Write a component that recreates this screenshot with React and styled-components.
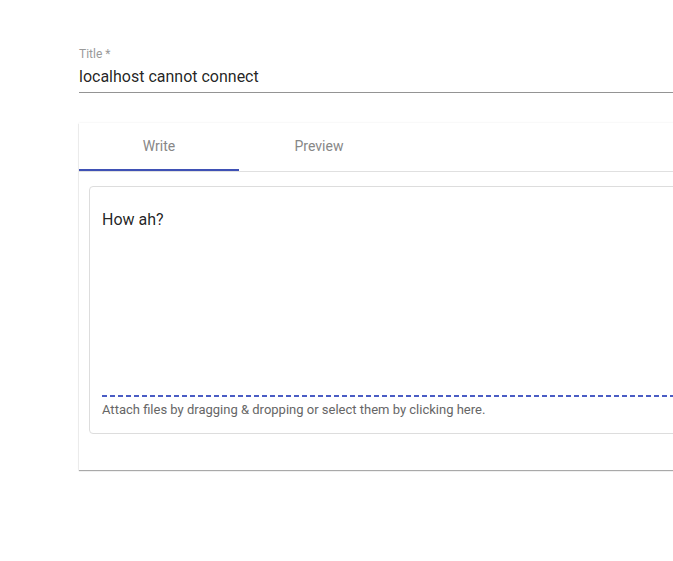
import React from 'react';
import styled, { createGlobalStyle } from 'styled-components';

const GlobalStyle = createGlobalStyle`
  html {
    overflow: hidden;
  }
  body {
    margin: 0;
    min-height: 100vh;
    background: #ffffff;
    font-family: Roboto, "Helvetica Neue", Arial, sans-serif;
    color: rgba(0, 0, 0, 0.87);
  }
`;

const Page = styled.div`
  width: 720px;
  padding: 47px 0 0 79px;
`;

const Field = styled.div`
  display: flex;
  flex-direction: column;
`;

const FieldLabel = styled.label`
  font-size: 12px;
  line-height: 14px;
  color: #9a9a9a;
`;

const FieldInput = styled.div`
  font-size: 16px;
  line-height: 19px;
  padding: 6px 0;
  color: rgba(0, 0, 0, 0.87);
  border-bottom: 1px solid #949494;
`;

const Card = styled.div`
  margin-top: 30px;
  background: #fff;
  box-shadow: 0 1px 1px rgba(0, 0, 0, 0.32), 0 0 2px rgba(0, 0, 0, 0.08);
  padding-bottom: 36px;
`;

const TabBar = styled.div`
  display: flex;
  height: 48px;
  border-bottom: 1px solid #e0e0e0;
`;

const Tab = styled.div`
  position: relative;
  width: 160px;
  display: flex;
  align-items: center;
  justify-content: center;
  padding-bottom: 2px;
  box-sizing: border-box;
  font-size: 14px;
  color: #878787;

  &::after {
    content: '';
    position: absolute;
    left: 0;
    right: 0;
    bottom: 0;
    height: 2px;
    background: ${(p) => (p.active ? '#3f51b5' : 'transparent')};
  }
`;

const Body = styled.div`
  padding: 14px 0 0 10px;
`;

const EditorBox = styled.div`
  border: 1px solid #dddddd;
  border-radius: 4px;
  padding-bottom: 15px;
`;

const TextArea = styled.div`
  height: 185px;
  padding: 23px 12px 0;
  font-size: 16px;
  line-height: 19px;
  color: rgba(0, 0, 0, 0.87);
`;

const DropZone = styled.div`
  margin-left: 12px;
  height: 2px;
  background-image: repeating-linear-gradient(
    to right,
    #4a5cc4 0,
    #4a5cc4 5px,
    transparent 5px,
    transparent 8px
  );
`;

const AttachHint = styled.div`
  margin: 5px 0 0 12px;
  font-size: 13px;
  line-height: 16px;
  color: #666666;
`;

export default function App() {
  return (
    <>
      <GlobalStyle />
      <Page>
        <Field>
          <FieldLabel>Title *</FieldLabel>
          <FieldInput>localhost cannot connect</FieldInput>
        </Field>
        <Card>
          <TabBar>
            <Tab active>Write</Tab>
            <Tab>Preview</Tab>
          </TabBar>
          <Body>
            <EditorBox>
              <TextArea>How ah?</TextArea>
              <DropZone />
              <AttachHint>Attach files by dragging &amp; dropping or select them by clicking here.</AttachHint>
            </EditorBox>
          </Body>
        </Card>
      </Page>
    </>
  );
}
